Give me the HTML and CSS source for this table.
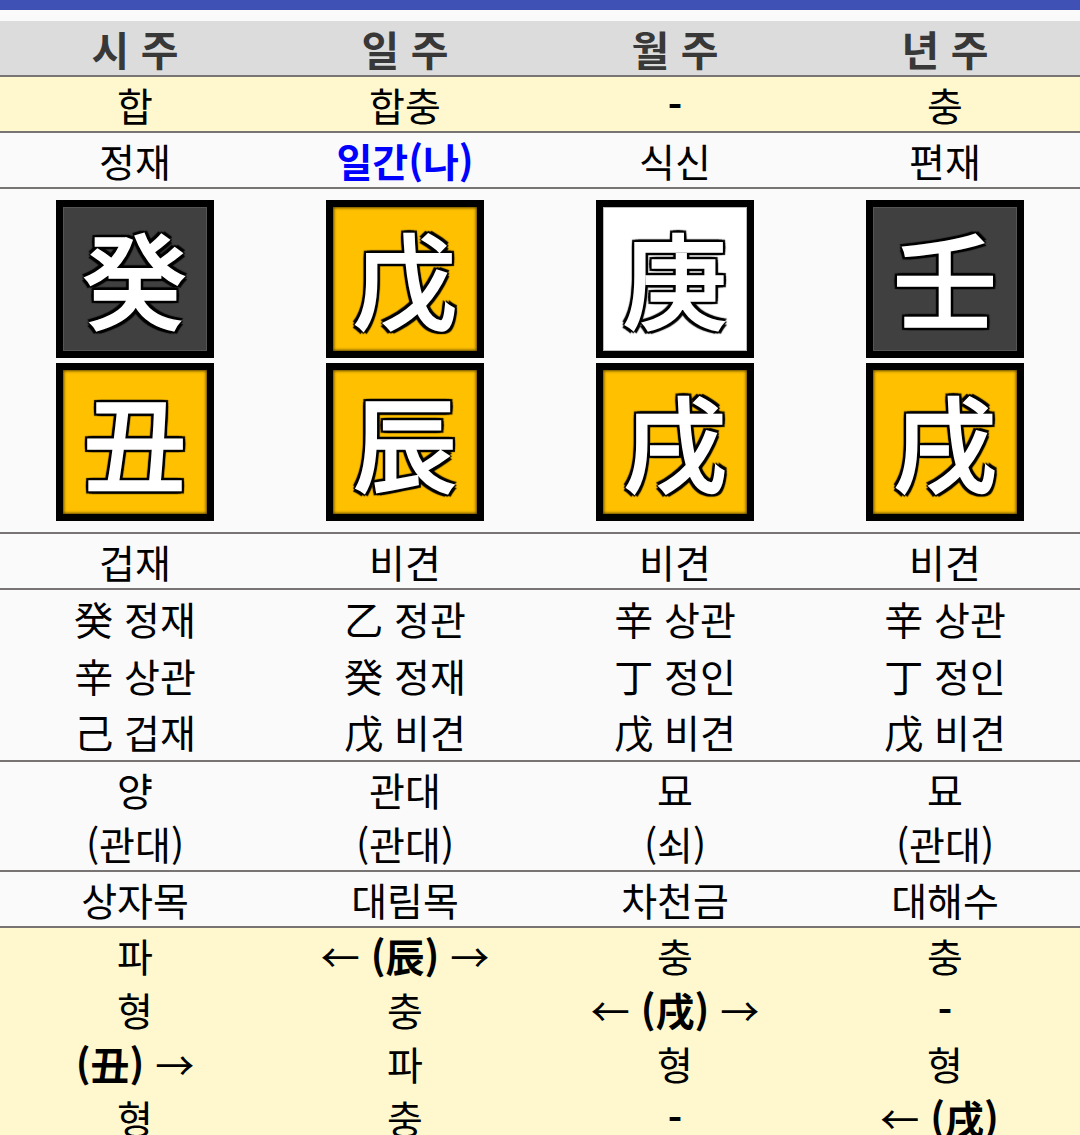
FILE: index.html
```html
<!DOCTYPE html>
<html lang="ko">
<head>
<meta charset="utf-8">
<title>사주</title>
<link rel="stylesheet" href="styles.css">
</head>
<body>
<div class="topbar"></div>
<div class="table">
  <div class="row head">
    <div class="cell">시 주</div>
    <div class="cell">일 주</div>
    <div class="cell">월 주</div>
    <div class="cell">년 주</div>
  </div>
  <div class="row yellow">
    <div class="cell">합</div>
    <div class="cell">합충</div>
    <div class="cell"><b>-</b></div>
    <div class="cell">충</div>
  </div>
  <div class="row">
    <div class="cell">정재</div>
    <div class="cell me">일간(나)</div>
    <div class="cell">식신</div>
    <div class="cell">편재</div>
  </div>
  <div class="row pillars">
    <div class="pillar">
      <div class="box dark"><span>癸</span></div>
      <div class="box gold"><span>丑</span></div>
    </div>
    <div class="pillar">
      <div class="box gold"><span>戊</span></div>
      <div class="box gold"><span>辰</span></div>
    </div>
    <div class="pillar">
      <div class="box white"><span>庚</span></div>
      <div class="box gold"><span>戌</span></div>
    </div>
    <div class="pillar">
      <div class="box dark"><span>壬</span></div>
      <div class="box gold"><span>戌</span></div>
    </div>
  </div>
  <div class="row">
    <div class="cell">겁재</div>
    <div class="cell">비견</div>
    <div class="cell">비견</div>
    <div class="cell">비견</div>
  </div>
  <div class="row multi hidden-stems">
    <div class="cell"><div>癸 정재</div><div>辛 상관</div><div>己 겁재</div></div>
    <div class="cell"><div>乙 정관</div><div>癸 정재</div><div>戊 비견</div></div>
    <div class="cell"><div>辛 상관</div><div>丁 정인</div><div>戊 비견</div></div>
    <div class="cell"><div>辛 상관</div><div>丁 정인</div><div>戊 비견</div></div>
  </div>
  <div class="row multi">
    <div class="cell"><div>양</div><div>(관대)</div></div>
    <div class="cell"><div>관대</div><div>(관대)</div></div>
    <div class="cell"><div>묘</div><div>(쇠)</div></div>
    <div class="cell"><div>묘</div><div>(관대)</div></div>
  </div>
  <div class="row">
    <div class="cell">상자목</div>
    <div class="cell">대림목</div>
    <div class="cell">차천금</div>
    <div class="cell">대해수</div>
  </div>
  <div class="row multi yellow last">
    <div class="cell"><div>파</div><div>형</div><div><b>(丑)</b> →</div><div>형</div></div>
    <div class="cell"><div>← <b>(辰)</b> →</div><div>충</div><div>파</div><div>충</div></div>
    <div class="cell"><div>충</div><div>← <b>(戌)</b> →</div><div>형</div><div><b>-</b></div></div>
    <div class="cell"><div>충</div><div><b>-</b></div><div>형</div><div>← <b>(戌)</b>&nbsp;</div></div>
  </div>
</div>
</body>
</html>
```

FILE: styles.css
```css
html {
  overflow: hidden;
}
body {
  margin: 0;
  background: #fafafa;
  font-family: "Noto Sans CJK KR", "Noto Sans", sans-serif;
  color: #000;
}
.topbar {
  height: 10px;
  background: #3f51b5;
}
.table {
  margin-top: 11px;
}
.row {
  display: grid;
  grid-template-columns: repeat(4, 1fr);
  border-bottom: 2px solid #787474;
}
.cell {
  text-align: center;
  font-size: 39px;
  line-height: 54px;
  height: 54px;
  white-space: nowrap;
}
.row.multi .cell {
  height: auto;
}
.hidden-stems .cell div {
  line-height: 56.67px;
}
.row.last {
  border-bottom: none;
}
.head {
  background: #dcdcdc;
}
.head .cell {
  font-size: 41px;
  font-weight: bold;
  color: #383838;
}
.yellow {
  background: #fff8cf;
}
.me {
  color: #0000ff;
  font-weight: bold;
}
.cell b {
  font-weight: bold;
}
.pillars {
  padding: 11px 0;
}
.pillar {
  display: flex;
  flex-direction: column;
  align-items: center;
  gap: 5px;
}
.box {
  box-sizing: border-box;
  width: 158px;
  height: 158px;
  border: 7px solid #000;
  display: flex;
  align-items: center;
  justify-content: center;
  box-shadow: inset 0 0 3px 1px rgba(0, 0, 0, 0.65);
}
.box span {
  font-size: 104px;
  font-weight: 500;
  line-height: 1;
  color: #fff;
  -webkit-text-stroke: 1.5px #fff;
  text-shadow: -3px -3px 1px #000, 3px -3px 1px #000, -3px 3px 1px #000, 3px 3px 1px #000,
    0 -3px 1px #000, 0 3px 1px #000, -3px 0 1px #000, 3px 0 1px #000, 0 0 3px #000;
  margin-top: -4px;
}
.dark {
  background: #404040;
  box-shadow: inset 0 0 0 1px #555;
}
.gold {
  background: #ffc000;
}
.white {
  background: #fff;
  box-shadow: inset 0 0 0 1px #bbb;
}
```
